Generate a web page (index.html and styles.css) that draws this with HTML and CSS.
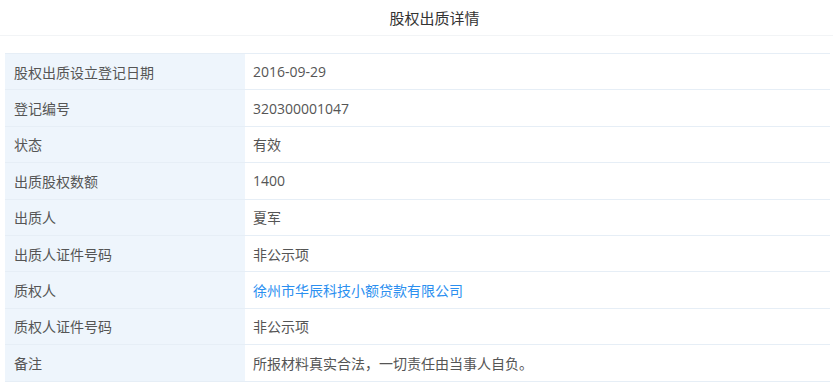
FILE: index.html
```html
<!DOCTYPE html>
<html lang="zh-CN">
<head>
<meta charset="utf-8">
<title>股权出质详情</title>
<link rel="stylesheet" href="styles.css">
</head>
<body>
<div class="page">
  <div class="title">股权出质详情</div>
  <div class="detail">
    <div class="row"><div class="label">股权出质设立登记日期</div><div class="value">2016-09-29</div></div>
    <div class="row"><div class="label">登记编号</div><div class="value">320300001047</div></div>
    <div class="row"><div class="label">状态</div><div class="value">有效</div></div>
    <div class="row"><div class="label">出质股权数额</div><div class="value">1400</div></div>
    <div class="row"><div class="label">出质人</div><div class="value">夏军</div></div>
    <div class="row"><div class="label">出质人证件号码</div><div class="value">非公示项</div></div>
    <div class="row"><div class="label">质权人</div><div class="value"><a class="link" href="#">徐州市华辰科技小额贷款有限公司</a></div></div>
    <div class="row"><div class="label">质权人证件号码</div><div class="value">非公示项</div></div>
    <div class="row"><div class="label">备注</div><div class="value">所报材料真实合法，一切责任由当事人自负。</div></div>
  </div>
</div>
</body>
</html>
```
FILE: styles.css
```css
html, body {
  margin: 0;
  padding: 0;
  background: #ffffff;
}
body {
  font-family: "Open Sans", "Noto Sans CJK SC", sans-serif;
  color: #555555;
  font-size: 14px;
}
.page {
  width: 833px;
}
.title {
  height: 35px;
  line-height: 36px;
  text-align: center;
  padding-left: 36px;
  font-size: 15px;
  color: #333333;
  border-bottom: 1px solid #f2f4f6;
}
.detail {
  margin: 17px 3px 0 5px;
  border-top: 1px solid #e6eef6;
}
.row {
  display: grid;
  grid-template-columns: 240px 1fr;
  height: 35.4px;
  border-bottom: 1px solid #e6eef6;
}
.label {
  background: #eef5fc;
  padding-left: 9px;
  display: flex;
  align-items: center;
}
.value {
  padding-left: 8px;
  display: flex;
  align-items: center;
}
.link {
  color: #2b8ff0;
  text-decoration: none;
}
```
